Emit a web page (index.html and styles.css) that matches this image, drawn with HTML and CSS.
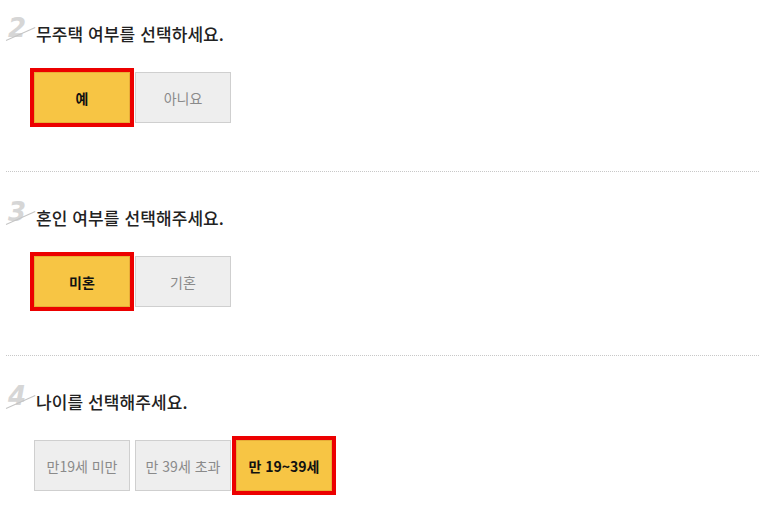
FILE: index.html
```html
<!DOCTYPE html>
<html lang="ko">
<head>
  <meta charset="UTF-8">
  <title>조건 선택</title>
  <link rel="stylesheet" href="styles.css">
</head>
<body>
  <div class="form-wrap">
    <div class="question">
      <h3 class="q-title"><span class="q-num">2</span>무주택 여부를 선택하세요.</h3>
      <div class="choices">
        <button class="choice is-on">예</button><button class="choice">아니요</button>
      </div>
    </div>

    <div class="question">
      <h3 class="q-title"><span class="q-num">3</span>혼인 여부를 선택해주세요.</h3>
      <div class="choices">
        <button class="choice is-on">미혼</button><button class="choice">기혼</button>
      </div>
    </div>

    <div class="question">
      <h3 class="q-title"><span class="q-num">4</span>나이를 선택해주세요.</h3>
      <div class="choices">
        <button class="choice">만19세 미만</button><button class="choice">만 39세 초과</button><button class="choice is-on">만 19~39세</button>
      </div>
    </div>
  </div>
</body>
</html>
```

FILE: styles.css
```css
body {
  margin: 0;
  background: #fff;
  font-family: "Noto Sans CJK KR", "Noto Sans", sans-serif;
  color: #222;
}

.form-wrap {
  padding: 21px 0 0 6px;
}

.question {
  padding: 0 0 48px 0;
  border-bottom: 1px dotted #c8c8c8;
  margin-bottom: 33px;
}

.question:last-child {
  border-bottom: none;
  margin-bottom: 0;
}

.q-title {
  display: flex;
  align-items: center;
  height: 24px;
  margin: 0 0 27px 0;
  font-size: 17px;
  font-weight: 500;
  letter-spacing: 0.1px;
  color: #222;
}

.q-num {
  position: relative;
  width: 30px;
  height: 24px;
  font-family: "DejaVu Sans", sans-serif;
  font-size: 26px;
  line-height: 22px;
  font-weight: bold;
  font-style: italic;
  color: #d6d6d6;
  padding-left: 2px;
  box-sizing: border-box;
  margin-top: -8px;
}

.q-num::after {
  content: "";
  position: absolute;
  left: 0;
  top: 23px;
  width: 32px;
  height: 1px;
  background: #c4c4c4;
  transform: rotate(-24deg);
  transform-origin: left center;
}

.choices {
  display: flex;
  gap: 5px;
  padding-left: 28px;
}

.choice {
  width: 96px;
  height: 51px;
  border: 1px solid #cfcfcf;
  background: #eeeeee;
  color: #8a8a8a;
  font-family: "Noto Sans CJK KR", "Noto Sans", sans-serif;
  font-size: 14px;
  padding: 0;
  cursor: pointer;
}

.choice.is-on {
  background: #f7c544;
  border-color: #e8ad38;
  color: #111;
  font-weight: bold;
  outline: 4px solid #ec0000;
}
```
